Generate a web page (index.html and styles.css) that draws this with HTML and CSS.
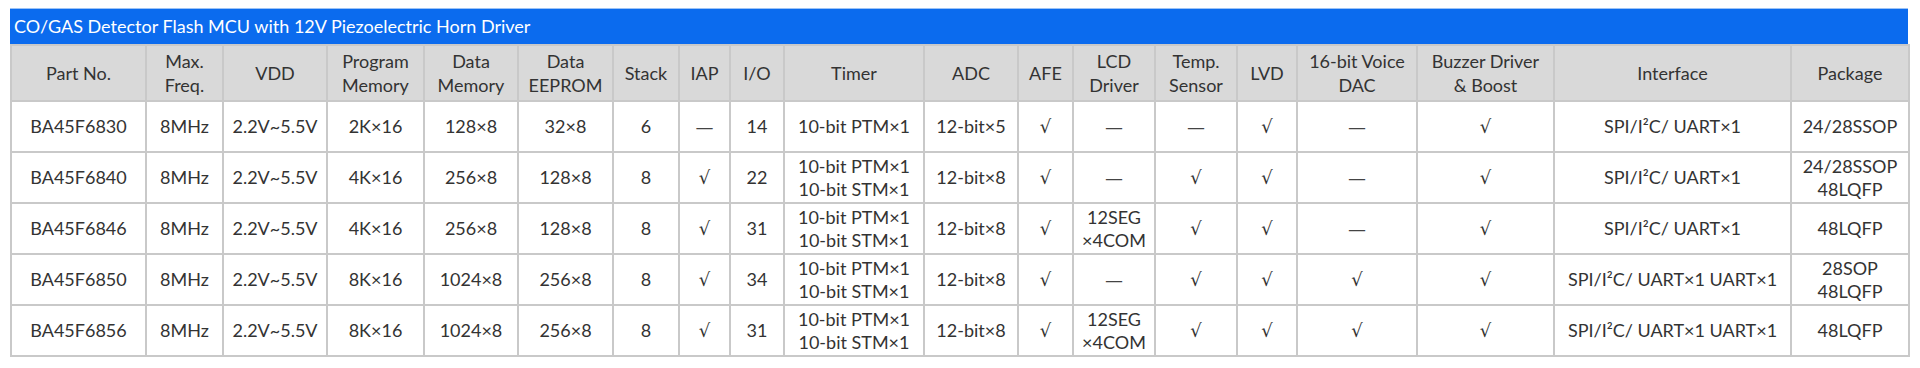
FILE: index.html
```html
<!DOCTYPE html>
<html lang="en">
<head>
<meta charset="utf-8">
<title>CO/GAS Detector Flash MCU</title>
<link rel="stylesheet" href="styles.css">
</head>
<body>
<div class="panel">
  <div class="title">CO/GAS Detector Flash MCU with 12V Piezoelectric Horn Driver</div>
  <table class="spec">
    <colgroup>
      <col class="c-part"><col class="c-freq"><col class="c-vdd"><col class="c-prog"><col class="c-data"><col class="c-eeprom"><col class="c-stack"><col class="c-iap"><col class="c-io"><col class="c-timer"><col class="c-adc"><col class="c-afe"><col class="c-lcd"><col class="c-temp"><col class="c-lvd"><col class="c-dac"><col class="c-buzz"><col class="c-intf"><col class="c-pkg">
    </colgroup>
    <thead>
      <tr>
        <th>Part No.</th><th>Max.<br>Freq.</th><th>VDD</th><th>Program<br>Memory</th><th>Data<br>Memory</th><th>Data<br>EEPROM</th><th>Stack</th><th>IAP</th><th>I/O</th><th>Timer</th><th>ADC</th><th>AFE</th><th>LCD<br>Driver</th><th>Temp.<br>Sensor</th><th>LVD</th><th>16-bit Voice<br>DAC</th><th>Buzzer Driver<br>&amp; Boost</th><th>Interface</th><th>Package</th>
      </tr>
    </thead>
    <tbody>
      <tr>
        <td>BA45F6830</td><td>8MHz</td><td>2.2V~5.5V</td><td>2K×16</td><td>128×8</td><td>32×8</td><td>6</td><td><span class="dash">—</span></td><td>14</td><td>10-bit PTM×1</td><td>12-bit×5</td><td><span class="chk">√</span></td><td><span class="dash">—</span></td><td><span class="dash">—</span></td><td><span class="chk">√</span></td><td><span class="dash">—</span></td><td><span class="chk">√</span></td><td>SPI/I²C/ UART×1</td><td>24/28SSOP</td>
      </tr>
      <tr>
        <td>BA45F6840</td><td>8MHz</td><td>2.2V~5.5V</td><td>4K×16</td><td>256×8</td><td>128×8</td><td>8</td><td><span class="chk">√</span></td><td>22</td><td>10-bit PTM×1<br>10-bit STM×1</td><td>12-bit×8</td><td><span class="chk">√</span></td><td><span class="dash">—</span></td><td><span class="chk">√</span></td><td><span class="chk">√</span></td><td><span class="dash">—</span></td><td><span class="chk">√</span></td><td>SPI/I²C/ UART×1</td><td>24/28SSOP<br>48LQFP</td>
      </tr>
      <tr>
        <td>BA45F6846</td><td>8MHz</td><td>2.2V~5.5V</td><td>4K×16</td><td>256×8</td><td>128×8</td><td>8</td><td><span class="chk">√</span></td><td>31</td><td>10-bit PTM×1<br>10-bit STM×1</td><td>12-bit×8</td><td><span class="chk">√</span></td><td>12SEG<br>×4COM</td><td><span class="chk">√</span></td><td><span class="chk">√</span></td><td><span class="dash">—</span></td><td><span class="chk">√</span></td><td>SPI/I²C/ UART×1</td><td>48LQFP</td>
      </tr>
      <tr>
        <td>BA45F6850</td><td>8MHz</td><td>2.2V~5.5V</td><td>8K×16</td><td>1024×8</td><td>256×8</td><td>8</td><td><span class="chk">√</span></td><td>34</td><td>10-bit PTM×1<br>10-bit STM×1</td><td>12-bit×8</td><td><span class="chk">√</span></td><td><span class="dash">—</span></td><td><span class="chk">√</span></td><td><span class="chk">√</span></td><td><span class="chk">√</span></td><td><span class="chk">√</span></td><td>SPI/I²C/ UART×1 UART×1</td><td>28SOP<br>48LQFP</td>
      </tr>
      <tr>
        <td>BA45F6856</td><td>8MHz</td><td>2.2V~5.5V</td><td>8K×16</td><td>1024×8</td><td>256×8</td><td>8</td><td><span class="chk">√</span></td><td>31</td><td>10-bit PTM×1<br>10-bit STM×1</td><td>12-bit×8</td><td><span class="chk">√</span></td><td>12SEG<br>×4COM</td><td><span class="chk">√</span></td><td><span class="chk">√</span></td><td><span class="chk">√</span></td><td><span class="chk">√</span></td><td>SPI/I²C/ UART×1 UART×1</td><td>48LQFP</td>
      </tr>
    </tbody>
  </table>
</div>
</body>
</html>
```
FILE: styles.css
```css
html, body {
  margin: 0;
  padding: 0;
  background: #ffffff;
}

body {
  font-family: Lato, "Open Sans", "Liberation Sans", sans-serif;
  color: #333333;
}

.panel {
  margin: 8px 0 0 10px;
  width: 1898px;
}

.title {
  height: 36px;
  line-height: 35px;
  background: #0b6bee;
  color: #ffffff;
  font-size: 18px;
  padding-left: 4px;
  border-top: 1px solid #9cc3f6;
  box-sizing: border-box;
  white-space: nowrap;
}

.spec {
  width: 1898px;
  table-layout: fixed;
  border-collapse: collapse;
  font-size: 18px;
  line-height: 23px;
}

.spec th,
.spec td {
  border: 2px solid #c9c9c9;
  padding: 0 2px;
  text-align: center;
  vertical-align: middle;
  white-space: nowrap;
  overflow: hidden;
}

.spec th {
  background: #d9d9d9;
  font-weight: normal;
  line-height: 24px;
}

.spec thead tr {
  height: 56px;
}

.spec tbody tr {
  height: 51px;
}

.spec td {
  background: #ffffff;
}

.dash {
  font-family: "DejaVu Sans", sans-serif;
  font-size: 18px;
  color: #444444;
}

.chk {
  font-family: "DejaVu Sans", sans-serif;
  font-size: 18px;
}

.c-part { width: 135px; }
.c-freq { width: 77px; }
.c-vdd { width: 104px; }
.c-prog { width: 97px; }
.c-data { width: 94px; }
.c-eeprom { width: 95px; }
.c-stack { width: 66px; }
.c-iap { width: 51px; }
.c-io { width: 54px; }
.c-timer { width: 140px; }
.c-adc { width: 94px; }
.c-afe { width: 55px; }
.c-lcd { width: 82px; }
.c-temp { width: 82px; }
.c-lvd { width: 60px; }
.c-dac { width: 120px; }
.c-buzz { width: 137px; }
.c-intf { width: 237px; }
.c-pkg { width: 118px; }
```
